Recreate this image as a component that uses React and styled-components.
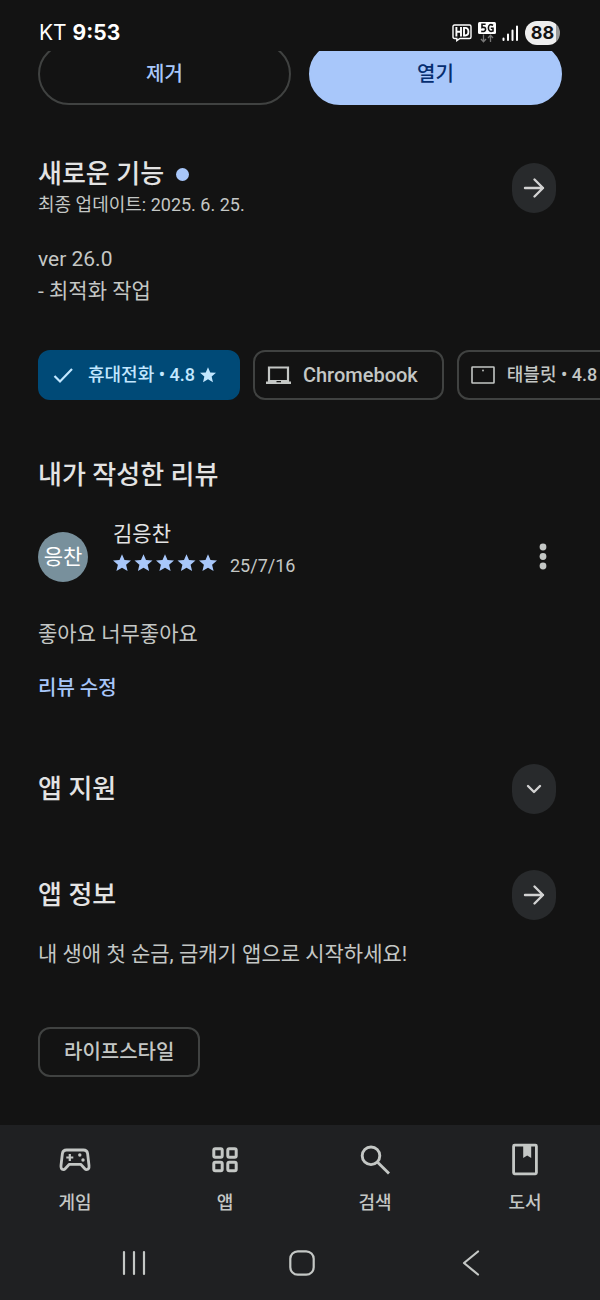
import styled, { createGlobalStyle, css } from 'styled-components';

const GlobalStyle = createGlobalStyle`
  * {
    box-sizing: border-box;
  }

  body {
    margin: 0;
    background-color: #131313;
    color: #e3e3e3;
    font-family: Roboto, "Noto Sans CJK KR", sans-serif;
    font-size: 21px;
    line-height: 32px;
  }

  button {
    padding: 0;
    border: none;
    background: none;
    color: inherit;
    font: inherit;
    cursor: pointer;
  }

  h2, p {
    margin: 0;
  }

  svg {
    display: block;
    flex-shrink: 0;
  }
`;

const Page = styled.div`
  min-height: 100vh;
  display: flex;
  flex-direction: column;
`;

const StatusBar = styled.header`
  height: 51px;
  padding: 16px 40px 0 39px;
  display: flex;
  justify-content: space-between;
  align-items: flex-start;
  color: #fff;
  font-family: Inter, sans-serif;
  line-height: 34px;
`;

const Clock = styled.strong`
  font-size: 21px;
  font-weight: 700;
`;

const StatusIcons = styled.div`
  height: 34px;
  display: flex;
  align-items: center;
  gap: 6px;
`;

const Battery = styled.span`
  width: 35px;
  height: 24px;
  border-radius: 12px;
  background: linear-gradient(to right, #eee 88%, #999 88%);
  color: #131313;
  font-size: 18px;
  font-weight: 700;
  line-height: 24px;
  text-align: center;
`;

const Content = styled.main`
  flex: 1;
  padding: 0 38px 48px;
  overflow: hidden;
`;

const Actions = styled.div`
  margin-top: -8px;
  display: flex;
  gap: 18px;
`;

const ActionButton = styled.button`
  && {
    flex: 1;
    height: 62px;
    border: 2px solid ${({ $filled }) => ($filled ? '#a8c7fa' : '#404241')};
    border-radius: 31px;
    background-color: ${({ $filled }) => ($filled ? '#a8c7fa' : 'transparent')};
    color: ${({ $filled }) => ($filled ? '#062e6f' : '#a8c7fa')};
    font-size: 20px;
    font-weight: 500;
  }
`;

const Section = styled.section`
  margin-top: ${({ $top }) => $top}px;
`;

const SectionHeader = styled.div`
  min-height: 50px;
  padding-right: 6px;
  display: flex;
  justify-content: space-between;
  align-items: center;
`;

const Heading = styled.h2`
  display: flex;
  align-items: center;
  gap: 12px;
  font-size: 26px;
  font-weight: 500;
  line-height: 34px;
`;

const NewDot = styled.span`
  width: 13px;
  height: 13px;
  border-radius: 50%;
  background-color: #a8c7fa;
`;

const Updated = styled.p`
  color: #c4c7c5;
  font-size: 18px;
  line-height: 28px;
`;

const RoundButton = styled.button`
  && {
    width: 44px;
    height: 50px;
    display: flex;
    justify-content: center;
    align-items: center;
    border-radius: 22px;
    background-color: #282a2c;
  }
`;

const Text = styled.p`
  margin-top: ${({ $top }) => $top}px;
  color: #c4c7c5;
`;

const Chips = styled.div`
  margin: 43px -38px 0 0;
  display: flex;
  gap: 13px;
  overflow: hidden;
`;

const chip = css`
  && {
    height: 50px;
    display: flex;
    flex-shrink: 0;
    align-items: center;
    border: 2px solid #404241;
    border-radius: 12px;
    color: #c4c7c5;
    font-weight: 500;
    white-space: nowrap;
  }
`;

const DeviceChip = styled.button`
  ${chip}

  && {
    padding: 0 24px 0 10px;
    gap: 11px;
    font-size: ${({ $large }) => ($large ? 20 : 18)}px;
    ${({ $selected }) => $selected && `
      padding-right: 22px;
      border-color: #004a77;
      background-color: #004a77;
      color: #c2e7ff;
    `}
  }
`;

const ChipLabel = styled.span`
  display: flex;
  align-items: center;
  gap: 5px;
`;

const CategoryChip = styled.button`
  ${chip}

  && {
    margin-top: 57px;
    padding: 0 24px;
    font-size: 20px;
  }
`;

const Review = styled.div`
  margin-top: 26px;
  display: flex;
  align-items: flex-end;
`;

const Avatar = styled.div`
  width: 50px;
  height: 50px;
  border-radius: 50%;
  background-color: #78909c;
  color: #fff;
  line-height: 50px;
  text-align: center;
`;

const Reviewer = styled.div`
  flex: 1;
  margin-left: 25px;
`;

const Rating = styled.div`
  height: 32px;
  display: flex;
  gap: 12px;
  color: #c4c7c5;
  font-size: 18px;
`;

const MenuButton = styled.button`
  && {
    width: 38px;
    height: 50px;
    display: flex;
    justify-content: center;
    align-items: center;
    color: #c4c7c5;
  }
`;

const EditLink = styled.a`
  margin-top: 22px;
  display: block;
  width: fit-content;
  color: #a8c7fa;
  font-size: 20px;
  font-weight: 500;
  text-decoration: none;
`;

const Footer = styled.footer`
  height: 175px;
  background-color: #1f2022;
  color: #c4c7c5;
`;

const Tabs = styled.nav`
  display: flex;
`;

const Tab = styled.a`
  flex: 1;
  height: 100px;
  padding-top: 16px;
  display: flex;
  flex-direction: column;
  align-items: center;
  gap: 8px;
  color: inherit;
  font-size: 18px;
  font-weight: 500;
  text-decoration: none;
`;

const SystemBar = styled.div`
  height: 75px;
  padding: 0 45px 0 50px;
  display: flex;
`;

const SystemButton = styled.button`
  && {
    flex: 1;
    display: flex;
    justify-content: center;
    align-items: center;
  }
`;

const STAR = 'M9 0.2 L11.5 6.1 L18 6.6 L13.1 10.8 L14.6 17.1 L9 13.7 L3.4 17.1 L4.9 10.8 L0 6.6 L6.5 6.1 Z';

const StarIcon = () => (
  <svg width="16" height="16" viewBox="0 0 18 18" fill="currentColor">
    <path d={STAR} />
  </svg>
);

const FiveStars = () => (
  <svg width="105" height="26" viewBox="0 0 105 26" fill="#a8c7fa" role="img" aria-label="5">
    {[0, 1, 2, 3, 4].map((i) => (
      <path key={i} d={STAR} transform={`translate(${i * 21.5} 4)`} />
    ))}
  </svg>
);

const ArrowIcon = () => (
  <svg width="24" height="24" viewBox="0 0 24 24" fill="none" stroke="#d2d2d2" strokeWidth="2.4" strokeLinecap="round" strokeLinejoin="round">
    <path d="M3 12H21M12.5 3.5L21 12L12.5 20.5" />
  </svg>
);

const ChevronIcon = () => (
  <svg width="24" height="24" viewBox="0 0 24 24" fill="none" stroke="#d2d2d2" strokeWidth="2.4" strokeLinecap="round" strokeLinejoin="round">
    <path d="M6 9L12 15L18 9" />
  </svg>
);

const CheckIcon = () => (
  <svg width="27" height="24" viewBox="0 0 27 24" fill="none" stroke="currentColor" strokeWidth="2.2">
    <path d="M4.5 13L10 18.5L22 6" />
  </svg>
);

const LaptopIcon = () => (
  <svg width="27" height="24" viewBox="0 0 27 24">
    <path d="M4 4.5H23V19H4Z" fill="none" stroke="currentColor" strokeWidth="2.2" />
    <path d="M1 18.5H26V21H1Z" fill="currentColor" />
    <path d="M3 17H24V19H3Z" fill="currentColor" />
    <path d="M11.5 18H16V19.3H11.5Z" fill="#131313" />
  </svg>
);

const TabletIcon = () => (
  <svg width="27" height="24" viewBox="0 0 27 24">
    <rect x="3" y="4" width="22" height="16" rx="0.5" fill="none" stroke="currentColor" strokeWidth="1.6" />
    <circle cx="14" cy="7.5" r="0.9" fill="currentColor" />
  </svg>
);

const MoreIcon = () => (
  <svg width="8" height="28" viewBox="0 0 8 28" fill="currentColor">
    <circle cx="4" cy="4" r="3.4" />
    <circle cx="4" cy="13.5" r="3.4" />
    <circle cx="4" cy="23" r="3.4" />
  </svg>
);

const HdIcon = () => (
  <svg width="20" height="18" viewBox="0 0 20 18" fill="none" stroke="#fff">
    <path d="M2.5 1H17.5Q19 1 19 2.5V13Q19 14.5 17.5 14.5H8L4.8 16.6V14.5H2.5Q1 14.5 1 13V2.5Q1 1 2.5 1Z" strokeWidth="1.4" />
    <path d="M4.4 3V12.4M9 3V12.4M4.4 7.8H9M12 3.9V11.5H13.2Q16.4 11.5 16.4 7.8Q16.4 3.9 13.2 3.9Z" strokeWidth="1.9" />
  </svg>
);

const NetworkIcon = () => (
  <svg width="18" height="22" viewBox="0 0 18 22" fill="none">
    <rect width="18" height="12" rx="1.5" fill="#fff" />
    <path d="M7.6 2.3H4V5.6Q7.6 4.6 7.6 7.4Q7.4 10 3.2 9.4M15.1 3.2Q10.6 1.2 10.4 6Q10.6 10.4 15 9V6.2H12.8" stroke="#131313" strokeWidth="1.6" />
    <path d="M5.5 12.5V19.5M3 17L5.5 19.7L8 17M12.5 20V13.5M10 16L12.5 13.3L15 16" stroke="#777" strokeWidth="1.3" />
  </svg>
);

const SignalIcon = () => (
  <svg width="17" height="17" viewBox="0 0 17 17" stroke="#fff" strokeWidth="2" strokeLinecap="round">
    <path d="M1.5 13.5V15M6 9.5V15M10.5 5.5V15M15 1.5V15" />
  </svg>
);

const GameIcon = () => (
  <svg width="38" height="38" viewBox="0 0 38 38" fill="none" stroke="currentColor" strokeWidth="2.8" strokeLinejoin="round">
    <path d="M10.5 9H27.5Q31 9 31.6 12.5L33 24.5Q33.4 28.6 30.6 28.6Q29.6 28.6 28.6 27.5L24.7 23.3H13.3L9.4 27.5Q8.4 28.6 7.4 28.6Q4.6 28.6 5 24.5L6.4 12.5Q7 9 10.5 9Z" />
    <path d="M13.8 13V20M10.3 16.5H17.3" strokeWidth="2.2" />
    <g fill="currentColor" stroke="none">
      <circle cx="23.8" cy="14" r="1.7" />
      <circle cx="27" cy="19" r="1.7" />
    </g>
  </svg>
);

const AppsIcon = () => (
  <svg width="38" height="38" viewBox="0 0 38 38" fill="none" stroke="currentColor" strokeWidth="3">
    <rect x="7.8" y="7.8" width="8.4" height="8.4" rx="1.5" />
    <rect x="21.8" y="7.8" width="8.4" height="8.4" rx="1.5" />
    <rect x="7.8" y="21.3" width="8.4" height="8.4" rx="1.5" />
    <rect x="21.8" y="21.3" width="8.4" height="8.4" rx="1.5" />
  </svg>
);

const SearchIcon = () => (
  <svg width="38" height="38" viewBox="0 0 38 38" fill="none" stroke="currentColor" strokeWidth="2.9">
    <circle cx="15" cy="14.8" r="8.8" />
    <path d="M21.3 21L33 32.5" />
  </svg>
);

const BookIcon = () => (
  <svg width="38" height="38" viewBox="0 0 38 38">
    <rect x="7.6" y="4.2" width="22.8" height="28.6" rx="1" fill="none" stroke="currentColor" strokeWidth="2.8" />
    <path d="M17.2 4H25.2V17L21.2 14.6L17.2 17Z" fill="currentColor" />
  </svg>
);

const RecentsIcon = () => (
  <svg width="24" height="26" viewBox="0 0 24 26" stroke="currentColor" strokeWidth="2.2" strokeLinecap="round">
    <path d="M2 2V24M12 2V24M22 2V24" />
  </svg>
);

const HomeIcon = () => (
  <svg width="26" height="26" viewBox="0 0 26 26" fill="none" stroke="currentColor" strokeWidth="2.2">
    <rect x="1.3" y="1.3" width="23.4" height="23.4" rx="7.5" />
  </svg>
);

const BackIcon = () => (
  <svg width="18" height="26" viewBox="0 0 18 26" fill="none" stroke="currentColor" strokeWidth="2.2" strokeLinecap="round" strokeLinejoin="round">
    <path d="M16 1.5L2 13L16 24.5" />
  </svg>
);

const tabs = [
  { label: '게임', Icon: GameIcon },
  { label: '앱', Icon: AppsIcon },
  { label: '검색', Icon: SearchIcon },
  { label: '도서', Icon: BookIcon },
];

export default function App() {
  return (
    <Page>
      <GlobalStyle />
      <StatusBar>
        <div>
          KT <Clock>9:53</Clock>
        </div>
        <StatusIcons>
          <HdIcon />
          <NetworkIcon />
          <SignalIcon />
          <Battery>88</Battery>
        </StatusIcons>
      </StatusBar>

      <Content>
        <Actions>
          <ActionButton>제거</ActionButton>
          <ActionButton $filled>열기</ActionButton>
        </Actions>

        <Section $top={52}>
          <SectionHeader>
            <div>
              <Heading>
                새로운 기능 <NewDot />
              </Heading>
              <Updated>최종 업데이트: 2025. 6. 25.</Updated>
            </div>
            <RoundButton aria-label="새로운 기능">
              <ArrowIcon />
            </RoundButton>
          </SectionHeader>
          <Text $top={24}>
            ver 26.0
            <br />- 최적화 작업
          </Text>
        </Section>

        <Chips>
          <DeviceChip $selected>
            <CheckIcon />
            <ChipLabel>
              휴대전화 • 4.8 <StarIcon />
            </ChipLabel>
          </DeviceChip>
          <DeviceChip $large>
            <LaptopIcon />
            Chromebook
          </DeviceChip>
          <DeviceChip>
            <TabletIcon />
            <ChipLabel>
              태블릿 • 4.8 <StarIcon />
            </ChipLabel>
          </DeviceChip>
        </Chips>

        <Section $top={58}>
          <Heading>내가 작성한 리뷰</Heading>
          <Review>
            <Avatar>응찬</Avatar>
            <Reviewer>
              <p>김응찬</p>
              <Rating>
                <FiveStars />
                <span>25/7/16</span>
              </Rating>
            </Reviewer>
            <MenuButton aria-label="리뷰">
              <MoreIcon />
            </MenuButton>
          </Review>
          <Text $top={36}>좋아요 너무좋아요</Text>
          <EditLink href="#review">리뷰 수정</EditLink>
        </Section>

        <Section $top={60}>
          <SectionHeader>
            <Heading>앱 지원</Heading>
            <RoundButton aria-label="앱 지원">
              <ChevronIcon />
            </RoundButton>
          </SectionHeader>
        </Section>

        <Section $top={56}>
          <SectionHeader>
            <Heading>앱 정보</Heading>
            <RoundButton aria-label="앱 정보">
              <ArrowIcon />
            </RoundButton>
          </SectionHeader>
          <Text $top={18}>내 생애 첫 순금, 금캐기 앱으로 시작하세요!</Text>
          <CategoryChip>라이프스타일</CategoryChip>
        </Section>
      </Content>

      <Footer>
        <Tabs>
          {tabs.map(({ label, Icon }) => (
            <Tab key={label} href="#">
              <Icon />
              {label}
            </Tab>
          ))}
        </Tabs>
        <SystemBar>
          <SystemButton aria-label="최근 앱">
            <RecentsIcon />
          </SystemButton>
          <SystemButton aria-label="홈">
            <HomeIcon />
          </SystemButton>
          <SystemButton aria-label="뒤로">
            <BackIcon />
          </SystemButton>
        </SystemBar>
      </Footer>
    </Page>
  );
}
